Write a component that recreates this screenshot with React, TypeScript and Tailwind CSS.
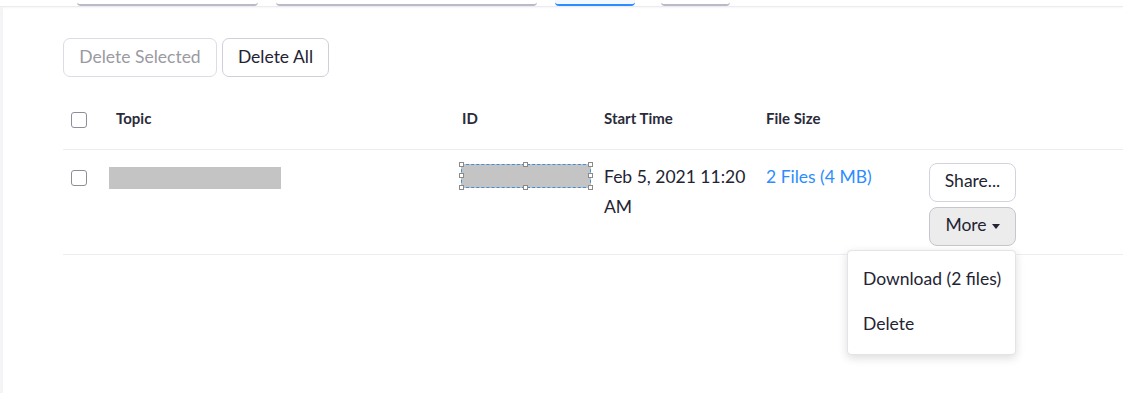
import { useState } from "react";

type Recording = {
  id: number;
  startTime: string;
  fileSize: string;
};

const recordings: Recording[] = [
  { id: 1, startTime: "Feb 5, 2021 11:20 AM", fileSize: "2 Files (4 MB)" },
];

const tabs = [
  { width: "w-[181px]", active: false, gap: "" },
  { width: "w-[261px]", active: false, gap: "ml-[18px]" },
  { width: "w-[80px]", active: true, gap: "ml-[18px]" },
  { width: "w-[69px]", active: false, gap: "ml-[26px]" },
];

function Checkbox() {
  return <span className="block w-4 h-4 rounded-[3px] border border-[#8e8e98] bg-white" />;
}

function Handle({ className }: { className: string }) {
  return <span className={`absolute w-[5px] h-[5px] bg-white border border-[#8a8a8a] ${className}`} />;
}

export default function App() {
  const [menuOpen] = useState(true);

  return (
    <div
      className="w-[1123px] h-[393px] overflow-hidden bg-white text-[#232333]"
      style={{ fontFamily: "Lato, 'Open Sans', sans-serif" }}
    >
      {/* tab strip cut off at the top */}
      <div className="h-[7px] flex items-stretch border-b border-[#ebebf0] shadow-[0_1px_2px_rgba(0,0,0,0.04)] pl-[77px]">
        {tabs.map((t, i) => (
          <div
            key={i}
            className={`${t.width} ${t.gap} rounded-b-sm border-b-2 ${
              t.active ? "border-[#2d8cff] bg-[#f3f9ff]" : "border-[#b9b9c9]"
            }`}
          />
        ))}
      </div>

      <div className="h-[386px] border-l-[3px] border-[#f4f4f6] pl-[60px]">
        <div className="flex gap-[5px] pt-[31px]">
          <button className="h-[39px] w-[154px] pb-[1px] rounded-[7px] border border-[#dcdce4] text-[17.5px] text-[#9a9aa2]">
            Delete Selected
          </button>
          <button className="h-[39px] w-[107px] pb-[1px] rounded-[7px] border border-[#cfcfdb] text-[17.5px] text-[#232333]">
            Delete All
          </button>
        </div>

        <div className="mt-[12px] h-[61px] grid grid-cols-[53px_346px_142px_162px_163px_1fr] items-center border-b border-[#ececf1] text-[15px] font-bold text-[#2b2b3a]">
          <div className="pl-2 pt-[2px]"><Checkbox /></div>
          <div className="pb-[2px]">Topic</div>
          <div className="pb-[2px]">ID</div>
          <div className="pb-[2px]">Start Time</div>
          <div className="pb-[2px]">File Size</div>
          <div />
        </div>

        {recordings.map((r) => (
          <div
            key={r.id}
            className="h-[105px] grid grid-cols-[53px_346px_142px_162px_163px_1fr] items-start border-b border-[#ececf1] pt-[13px] text-[17.5px]"
          >
            <div className="pl-2 pt-[7px]"><Checkbox /></div>
            <div className="-ml-[7px] pt-[4px]">
              <div className="w-[172px] h-[22px] bg-[#c4c4c4]" />
            </div>
            <div className="-ml-[1px] pt-[1px]">
              <div className="relative w-[130px] h-[24px] bg-[#c4c4c4] border border-dashed border-[#3d8fd6]">
                <Handle className="-left-[3px] -top-[3px]" />
                <Handle className="left-[61px] -top-[3px]" />
                <Handle className="-right-[3px] -top-[3px]" />
                <Handle className="-left-[3px] top-[8px]" />
                <Handle className="-right-[3px] top-[8px]" />
                <Handle className="-left-[3px] -bottom-[3px]" />
                <Handle className="left-[61px] -bottom-[3px]" />
                <Handle className="-right-[3px] -bottom-[3px]" />
              </div>
            </div>
            <div className="-mt-[1px] leading-[30px] pr-2">{r.startTime}</div>
            <div className="-mt-[1px] leading-[30px] text-[#2d8cff]">{r.fileSize}</div>
            <div className="relative flex flex-col gap-[5px] w-[87px]">
              <button className="h-[39px] pb-[2px] rounded-[8px] border border-[#d3d3df] bg-white text-[17.5px]">
                Share...
              </button>
              <button className="h-[39px] pb-[2px] rounded-[8px] border border-[#c6c6cf] bg-[#ececec] text-[17.5px] flex items-center justify-center gap-[5px]">
                More
                <svg width="8" height="5" viewBox="0 0 8 5" className="mt-[2px]">
                  <path d="M0 0h8L4 5z" fill="#232333" />
                </svg>
              </button>

              {menuOpen && (
                <div className="absolute right-0 top-[87px] w-[169px] rounded-[4px] border border-[#e3e3e8] bg-white pt-[6px] pb-[7px] shadow-[0_3px_10px_rgba(0,0,0,0.14)] z-10">
                  <div className="h-[45px] flex items-center px-[15px] text-[17.5px] whitespace-nowrap">
                    Download (2 files)
                  </div>
                  <div className="h-[45px] flex items-center px-[15px] text-[17.5px]">Delete</div>
                </div>
              )}
            </div>
          </div>
        ))}
      </div>
    </div>
  );
}
